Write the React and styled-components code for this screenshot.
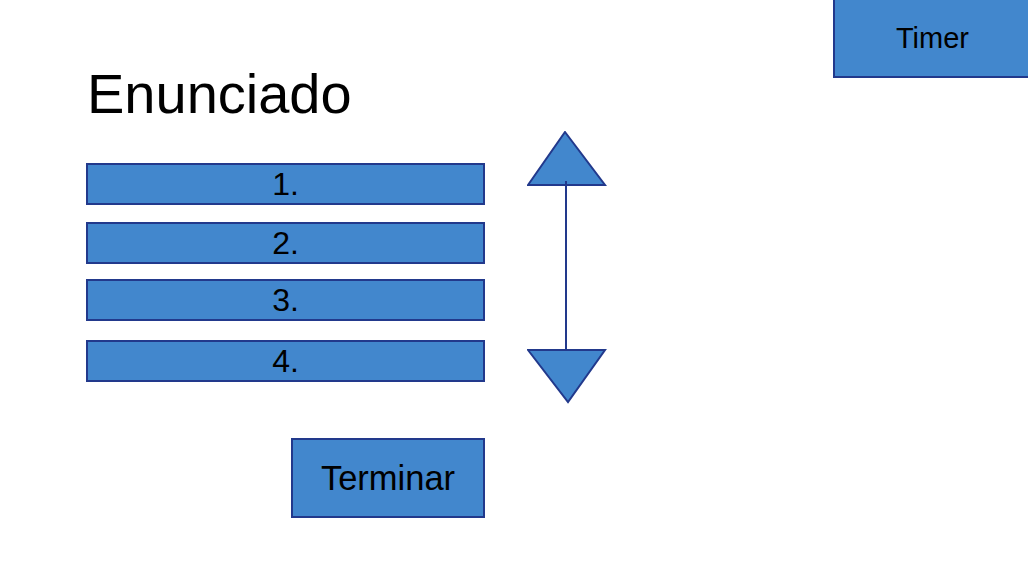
import React from "react";
import styled, { createGlobalStyle } from "styled-components";

const Global = createGlobalStyle`
  html, body { margin: 0; padding: 0; background: #ffffff; overflow: hidden; }
  body { font-family: "Liberation Sans", Arial, sans-serif; color: #000; }
`;

const FILL = "#4287cd";
const EDGE = "#22398c";

const Page = styled.div`
  display: flex;
  align-items: flex-start;
  width: 1028px;
  height: 585px;
  overflow: hidden;
`;

const Content = styled.div`
  display: flex;
  flex-direction: column;
  padding: 66px 0 0 86px;
`;

const Title = styled.h1`
  margin: 0 0 41px 1px;
  font-family: "Liberation Sans", Arial, sans-serif;
  font-weight: 400;
  font-size: 56px;
  line-height: 56px;
`;

const Body = styled.div`
  display: flex;
  align-items: flex-start;
  gap: 42px;
`;

const ListColumn = styled.div`
  display: flex;
  flex-direction: column;
  width: 399px;
`;

const Option = styled.div`
  box-sizing: border-box;
  height: 42px;
  margin-top: ${(p) => p.$offset}px;
  background: ${FILL};
  border: 2px solid ${EDGE};
  display: flex;
  align-items: center;
  justify-content: center;
  font-size: 32px;
  line-height: 1;
`;

const BoxButton = styled.button`
  box-sizing: border-box;
  background: ${FILL};
  border: 2px solid ${EDGE};
  color: #000;
  font-family: "Liberation Sans", Arial, sans-serif;
  display: flex;
  align-items: center;
  justify-content: center;
  padding: 0;
  cursor: pointer;
`;

const FinishButton = styled(BoxButton)`
  align-self: flex-end;
  margin-top: 56px;
  width: 194px;
  height: 80px;
  font-size: 34.5px;
`;

const TimerBox = styled(BoxButton)`
  margin-left: auto;
  margin-right: -4px;
  width: 199px;
  height: 78px;
  border-top: none;
  font-size: 29px;
`;

const ArrowSvg = styled.svg`
  margin-top: -32px;
  flex: none;
`;

function Arrow() {
  return (
    <ArrowSvg width="80" height="274" viewBox="0 0 80 274">
      <polygon points="38,1 78,54 1,54" fill={FILL} stroke={EDGE} strokeWidth="2" strokeLinejoin="miter" />
      <polygon points="1,219 78,219 41,271" fill={FILL} stroke={EDGE} strokeWidth="2" strokeLinejoin="miter" />
      <line x1="39" y1="50" x2="39" y2="219" stroke={EDGE} strokeWidth="2" />
    </ArrowSvg>
  );
}

const options = [
  { label: "1.", offset: 0 },
  { label: "2.", offset: 17 },
  { label: "3.", offset: 15 },
  { label: "4.", offset: 19 },
];

export default function App() {
  return (
    <>
      <Global />
      <Page>
        <Content>
          <Title>Enunciado</Title>
          <Body>
            <ListColumn>
              {options.map((o) => (
                <Option key={o.label} $offset={o.offset}>
                  {o.label}
                </Option>
              ))}
              <FinishButton>Terminar</FinishButton>
            </ListColumn>
            <Arrow />
          </Body>
        </Content>
        <TimerBox>Timer</TimerBox>
      </Page>
    </>
  );
}
